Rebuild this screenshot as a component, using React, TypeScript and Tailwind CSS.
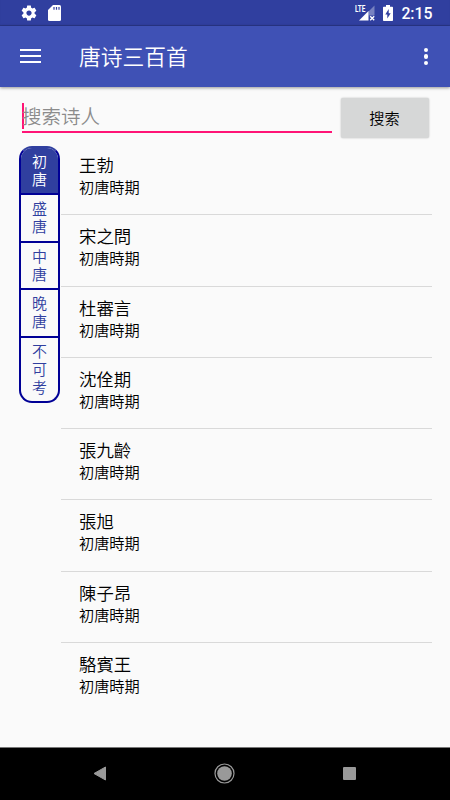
import React, { useState } from 'react';

interface Poet {
  name: string;
  period: string;
}

const poets: Poet[] = [
  { name: '王勃', period: '初唐時期' },
  { name: '宋之問', period: '初唐時期' },
  { name: '杜審言', period: '初唐時期' },
  { name: '沈佺期', period: '初唐時期' },
  { name: '張九齡', period: '初唐時期' },
  { name: '張旭', period: '初唐時期' },
  { name: '陳子昂', period: '初唐時期' },
  { name: '駱賓王', period: '初唐時期' },
];

const periods = ['初唐', '盛唐', '中唐', '晚唐', '不可考'];

const StatusBar: React.FC = () => (
  <div className="flex h-[26px] shrink-0 items-center bg-[#303f9f] pl-[19.5px] pr-[17.5px] text-white shadow-[inset_0_-1px_1px_rgba(0,0,0,0.15)]">
    <svg className="h-[18px] w-[18px]" viewBox="0 0 24 24" fill="currentColor">
      <path d="M19.43 12.98c.04-.32.07-.64.07-.98s-.03-.66-.07-.98l2.11-1.65c.19-.15.24-.42.12-.64l-2-3.46c-.12-.22-.39-.3-.61-.22l-2.49 1c-.52-.4-1.08-.73-1.69-.98l-.38-2.65C14.46 2.18 14.25 2 14 2h-4c-.25 0-.46.18-.49.42l-.38 2.65c-.61.25-1.17.59-1.69.98l-2.49-1c-.23-.09-.49 0-.61.22l-2 3.46c-.13.22-.07.49.12.64l2.11 1.65c-.04.32-.07.65-.07.98s.03.66.07.98l-2.11 1.65c-.19.15-.24.42-.12.64l2 3.46c.12.22.39.3.61.22l2.49-1c.52.4 1.08.73 1.69.98l.38 2.65c.03.24.24.42.49.42h4c.25 0 .46-.18.49-.42l.38-2.65c.61-.25 1.17-.59 1.69-.98l2.49 1c.23.09.49 0 .61-.22l2-3.46c.12-.22.07-.49-.12-.64l-2.11-1.65zM12 15.5c-1.93 0-3.5-1.57-3.5-3.5s1.57-3.5 3.5-3.5 3.5 1.57 3.5 3.5-1.57 3.5-3.5 3.5z" />
    </svg>
    <svg className="ml-[10.5px] h-[16px] w-[13px]" viewBox="0 0 13 16">
      <path d="M5 0h6.500Q13 0 13 1.500v13q0 1.500-1.500 1.500h-10Q0 16 0 14.500V5z" fill="#fff" />
      <path d="M6 2v2.800M8.500 2v2.800M11 2v2.800" stroke="#303f9f" strokeWidth="1.200" />
    </svg>
    <div className="ml-auto flex items-center">
      <svg className="h-[18px] w-[21px]" viewBox="0 0 21 18">
        <text x="0" y="8.3" fill="#fff" fontSize="9.5" fontWeight="700" fontFamily="Roboto, sans-serif" textLength="10.4" lengthAdjust="spacingAndGlyphs">LTE</text>
        <path d="M19.500 1.500v10h-6V7.500z" fill="#fff" fillOpacity="0.35" />
        <path d="M13.500 7V16.500H4z" fill="#fff" />
        <path d="M15.200 12.200l4 4m0-4l-4 4" stroke="#fff" strokeWidth="1.400" />
      </svg>
      <svg className="ml-[7.5px] h-[16px] w-[10px]" viewBox="0 0 10 16">
        <path d="M3 0h4v1.700h2.200q.8 0 .8.800v12.700q0 .8-.8.800H.8q-.8 0-.8-.8V2.500q0-.8.8-.8H3z" fill="#fff" />
        <path d="M5.700 4v4.300h2L4.300 13.500V9.500h-2z" fill="#303f9f" />
      </svg>
      <span className="ml-2 pt-[2px] font-[Roboto,sans-serif] text-[15.8px] leading-none font-medium">2:15</span>
    </div>
  </div>
);

const AppBar: React.FC = () => (
  <header className="relative z-10 flex h-[61px] shrink-0 items-center bg-[#3f51b5] pr-[22px] pl-5 text-white shadow-[0_1px_3px_rgba(0,0,0,0.4)]">
    <button aria-label="Menu" className="-mt-px flex w-[21px] flex-col gap-[4px]">
      <span className="h-[2px] w-full bg-white" />
      <span className="h-[2px] w-full bg-white" />
      <span className="h-[2px] w-full bg-white" />
    </button>
    <h1 className="ml-[38px] -mt-[1px] text-[21.75px] leading-none">唐诗三百首</h1>
    <button aria-label="More" className="ml-auto flex flex-col gap-[2px]">
      <span className="h-[4.5px] w-[4.5px] rounded-full bg-white" />
      <span className="h-[4.5px] w-[4.5px] rounded-full bg-white" />
      <span className="h-[4.5px] w-[4.5px] rounded-full bg-white" />
    </button>
  </header>
);

const SearchRow: React.FC = () => (
  <div className="flex h-[59px] shrink-0 items-start pt-[11px] pr-[21.5px] pl-[22px]">
    <div className="flex h-[35px] w-[310px] items-start border-b-2 border-[#ff1476] pt-[5px]">
      <span className="h-[26px] w-[2px] bg-[#ff1476]" />
      <span className="-ml-[2px] text-[19.5px] leading-[26px] text-[#8c8c8c]">搜索诗人</span>
    </div>
    <button className="ml-auto h-10 w-[88px] rounded-[2px] bg-[#d6d7d7] pb-[1px] text-[15.2px] text-black shadow-[0_0_2px_rgba(0,0,0,0.25)]">
      搜索
    </button>
  </div>
);

interface PeriodTabsProps {
  selected: number;
  onSelect: (index: number) => void;
}

const PeriodTabs: React.FC<PeriodTabsProps> = ({ selected, onSelect }) => (
  <div
    className={`flex w-[41px] flex-col self-start overflow-hidden rounded-[13px] border-2 border-[#000096] ${
      selected === 0 ? 'border-t-[#303f9f]' : ''
    }`}
  >
    {periods.map((period, index) => (
      <button
        key={period}
        onClick={() => onSelect(index)}
        className={`flex justify-center border-[#000096] pt-[4px] pb-[5.4px] text-[15px] leading-[18px] not-last:border-b-2 ${
          index === selected ? 'bg-[#303f9f] text-white' : 'text-[#303f9f]'
        }`}
      >
        <span className="w-[15px] break-all">{period}</span>
      </button>
    ))}
  </div>
);

const PoetList: React.FC = () => (
  <ul className="-mt-[2px] ml-[1.4px] w-[371px]">
    {poets.map((poet) => (
      <li key={poet.name} className="h-[71.25px] border-b border-[#d9d9d9] pt-[9px] pl-[17.6px] text-black last:border-b-0">
        <div className="text-[17.4px] leading-[23px]">{poet.name}</div>
        <div className="text-[15.2px] leading-[20px]">{poet.period}</div>
      </li>
    ))}
  </ul>
);

const NavigationBar: React.FC = () => (
  <nav className="flex h-[53px] shrink-0 items-center justify-between border-t border-[#777] bg-black pr-[94px] pb-px pl-[93px]">
    <svg className="h-[15px] w-[14px]" viewBox="0 0 14 15">
      <path d="M12.500 1L1 7.500L12.500 14z" fill="#999" stroke="#999" strokeLinejoin="round" />
    </svg>
    <svg className="h-[21px] w-[21px]" viewBox="0 0 21 21">
      <circle cx="10.500" cy="10.500" r="9.500" fill="none" stroke="#999" strokeWidth="1.200" />
      <circle cx="10.500" cy="10.500" r="7.300" fill="#999" />
    </svg>
    <span className="h-[13.5px] w-[13.5px] rounded-[1px] bg-[#999]" />
  </nav>
);

const App: React.FC = () => {
  const [selected, setSelected] = useState(0);

  return (
    <div className="flex h-[800px] w-[450px] flex-col overflow-hidden bg-[#fafafa] font-['Noto_Sans_CJK_SC',sans-serif] font-[350]">
      <StatusBar />
      <AppBar />
      <SearchRow />
      <main className="flex min-h-0 flex-1 pl-[19px]">
        <PeriodTabs selected={selected} onSelect={setSelected} />
        <PoetList />
      </main>
      <NavigationBar />
    </div>
  );
};

export default App;
